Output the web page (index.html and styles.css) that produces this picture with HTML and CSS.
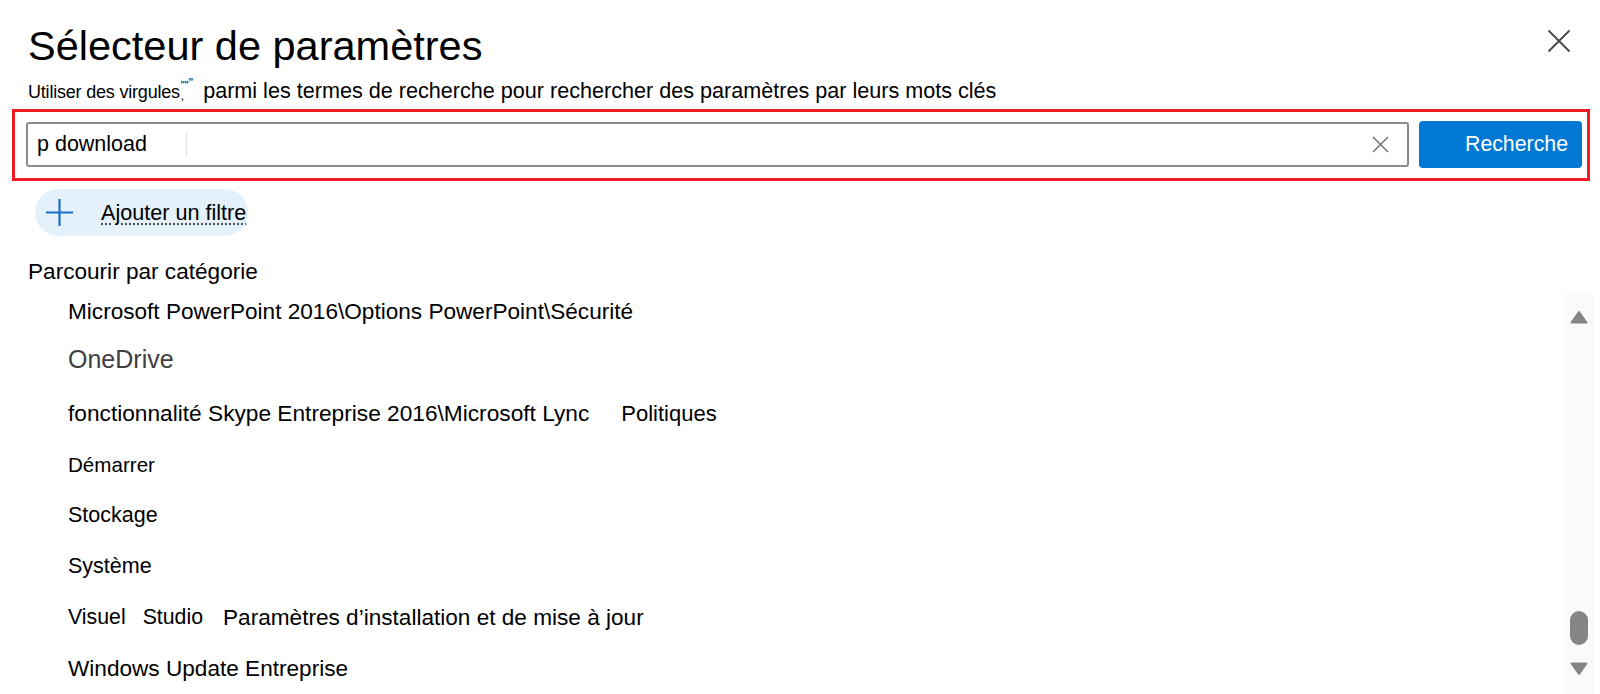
FILE: index.html
```html
<!DOCTYPE html>
<html lang="fr">
<head>
<meta charset="utf-8">
<title>Sélecteur de paramètres</title>
<link rel="stylesheet" href="styles.css">
</head>
<body>
<div class="panel">
  <header class="head">
    <h1 class="title">Sélecteur de paramètres</h1>
    <button class="close" aria-label="Fermer">
      <svg width="24" height="24" viewBox="0 0 24 24"><path d="M1.5 1.5 L22.5 22.5 M22.5 1.5 L1.5 22.5" stroke="#454545" stroke-width="1.8" fill="none"/></svg>
    </button>
  </header>
  <p class="hint"><span class="hint-small">Utiliser des virgules</span><span class="quotes"><span class="q-top">""</span><span class="q-comma">,</span></span><span class="q-close">"</span><span class="hint-main">parmi les termes de recherche pour rechercher des paramètres par leurs mots clés</span></p>

  <div class="search-frame">
    <div class="search-input">
      <span class="query">p download</span>
      <span class="caret"></span>
      <span class="grow"></span>
      <svg class="clear" width="17" height="17" viewBox="0 0 17 17"><path d="M1 1 L16 16 M16 1 L1 16" stroke="#6b6b6b" stroke-width="1.4" fill="none"/></svg>
    </div>
    <button class="search-btn">Recherche</button>
  </div>

  <button class="filter">
    <svg class="plus" width="27" height="27" viewBox="0 0 27 27"><path d="M13.5 0 V27 M0 13.5 H27" stroke="#1a6fc9" stroke-width="2.2" fill="none"/></svg>
    <span class="filter-label">Ajouter un filtre</span>
  </button>

  <div class="browse-label">Parcourir par catégorie</div>

  <div class="browse">
    <ul class="cats">
      <li class="cat s225">Microsoft PowerPoint 2016\Options PowerPoint\Sécurité</li>
      <li class="cat onedrive">OneDrive</li>
      <li class="cat s227">fonctionnalité Skype Entreprise 2016\Microsoft Lync<span class="sub pol">Politiques</span></li>
      <li class="cat s205">Démarrer</li>
      <li class="cat s215">Stockage</li>
      <li class="cat s215">Système</li>
      <li class="cat s21">Visuel<span class="sub studio">Studio</span><span class="sub params">Paramètres d’installation et de mise à jour</span></li>
      <li class="cat s225">Windows Update Entreprise</li>
    </ul>
    <div class="scrollbar">
      <svg class="arrow" width="18" height="14" viewBox="0 0 18 14"><path d="M9 2 L16.5 12.5 H1.5 Z" fill="#858585" stroke="#858585" stroke-width="2" stroke-linejoin="round"/></svg>
      <span class="track-space"></span>
      <span class="thumb"></span>
      <svg class="arrow down" width="18" height="14" viewBox="0 0 18 14"><path d="M9 12 L16.5 1.5 H1.5 Z" fill="#858585" stroke="#858585" stroke-width="2" stroke-linejoin="round"/></svg>
    </div>
  </div>
</div>
</body>
</html>
```
FILE: styles.css
```css
* { box-sizing: border-box; }

html, body {
  margin: 0;
  padding: 0;
  background: #ffffff;
}

body {
  font-family: "Liberation Sans", Arial, sans-serif;
  color: #000;
  width: 1600px;
  height: 694px;
  overflow: hidden;
}

.panel {
  display: flex;
  flex-direction: column;
}

.head {
  display: flex;
  justify-content: space-between;
  align-items: flex-start;
  padding: 22px 29px 0 28px;
}

.title {
  margin: 0;
  font-size: 41.5px;
  line-height: 48px;
  font-weight: 400;
}

.close {
  margin-top: 7px;
  padding: 0;
  border: 0;
  background: none;
  width: 24px;
  height: 24px;
  display: flex;
}

.hint {
  margin: 7px 0 0 28px;
  height: 27px;
  display: flex;
  align-items: center;
  white-space: nowrap;
}

.hint-small {
  font-size: 18px;
  line-height: 22px;
  letter-spacing: -0.2px;
  padding-top: 3px;
}

.quotes {
  display: inline-flex;
  flex-direction: column;
  align-items: flex-start;
  width: 7px;
  margin-left: 1px;
}

.q-top {
  font-size: 11px;
  line-height: 11px;
}

.q-comma {
  font-size: 12px;
  line-height: 11px;
}

.q-close {
  font-size: 12px;
  line-height: 12px;
  align-self: flex-start;
  margin-left: 1px;
}

.hint-main {
  font-size: 21.6px;
  line-height: 26px;
  margin-left: 10px;
}

.search-frame {
  margin: 5px 10px 0 12px;
  border: 3px solid #ee1b24;
  padding: 9px 5px 10px 11px;
  display: flex;
  align-items: center;
  gap: 10px;
}

.search-input {
  flex: 1;
  height: 45px;
  border: 2px solid #8a8a8a;
  border-radius: 3px;
  display: flex;
  align-items: center;
  padding: 0 18px 0 9px;
}

.query {
  font-size: 21.5px;
  color: #000;
}

.caret {
  width: 1px;
  height: 24px;
  background: #e2e2e2;
  margin-left: 39px;
}

.grow { flex: 1; }

.clear { display: block; }

.search-btn {
  width: 163px;
  height: 47px;
  border: 0;
  border-radius: 4px;
  background: #0078d4;
  color: #fff;
  font-family: "Liberation Sans", Arial, sans-serif;
  font-size: 21.3px;
  display: flex;
  align-items: center;
  justify-content: flex-end;
  padding: 0 14px 0 0;
}

.filter {
  align-self: flex-start;
  margin: 8px 0 0 35px;
  height: 47px;
  width: 213px;
  border: 0;
  border-radius: 24px;
  background: #e5f1fa;
  display: flex;
  align-items: center;
  padding: 0 0 0 11px;
  font-family: "Liberation Sans", Arial, sans-serif;
  color: #000;
  white-space: nowrap;
}

.plus { display: block; flex: none; }

.filter-label {
  margin-left: 28px;
  font-size: 21.6px;
  text-decoration: underline dotted #555;
  text-underline-offset: 4px;
}

.browse-label {
  margin: 22px 0 0 28px;
  font-size: 22.6px;
  line-height: 28px;
}

.browse {
  display: flex;
  align-items: flex-start;
}

.cats {
  flex: 1;
  list-style: none;
  margin: 0;
  padding: 0 0 0 68px;
}

.cat {
  height: 51px;
  display: flex;
  align-items: center;
  white-space: nowrap;
}

.s227 { font-size: 22.7px; }
.s225 { font-size: 22.6px; }
.s215 { font-size: 21.5px; }
.s21 { font-size: 21.3px; }
.s205 { font-size: 20.6px; }

.onedrive {
  font-size: 25px;
  color: #404040;
  padding-bottom: 7px;
}

.sub { display: inline-block; }

.pol {
  font-size: 22px;
  margin-left: 32px;
}

.studio {
  margin-left: 17px;
}

.params {
  font-size: 22.6px;
  margin-left: 20px;
}

.scrollbar {
  width: 30px;
  height: 401px;
  margin: 8px 6px 0 0;
  background: #fafafa;
  display: flex;
  flex-direction: column;
  align-items: center;
  padding-top: 16px;
}

.arrow { display: block; flex: none; }

.track-space {
  height: 287px;
}

.thumb {
  width: 18px;
  height: 34px;
  border-radius: 9px;
  background: #858585;
}

.arrow.down {
  margin-top: 17px;
}
```
